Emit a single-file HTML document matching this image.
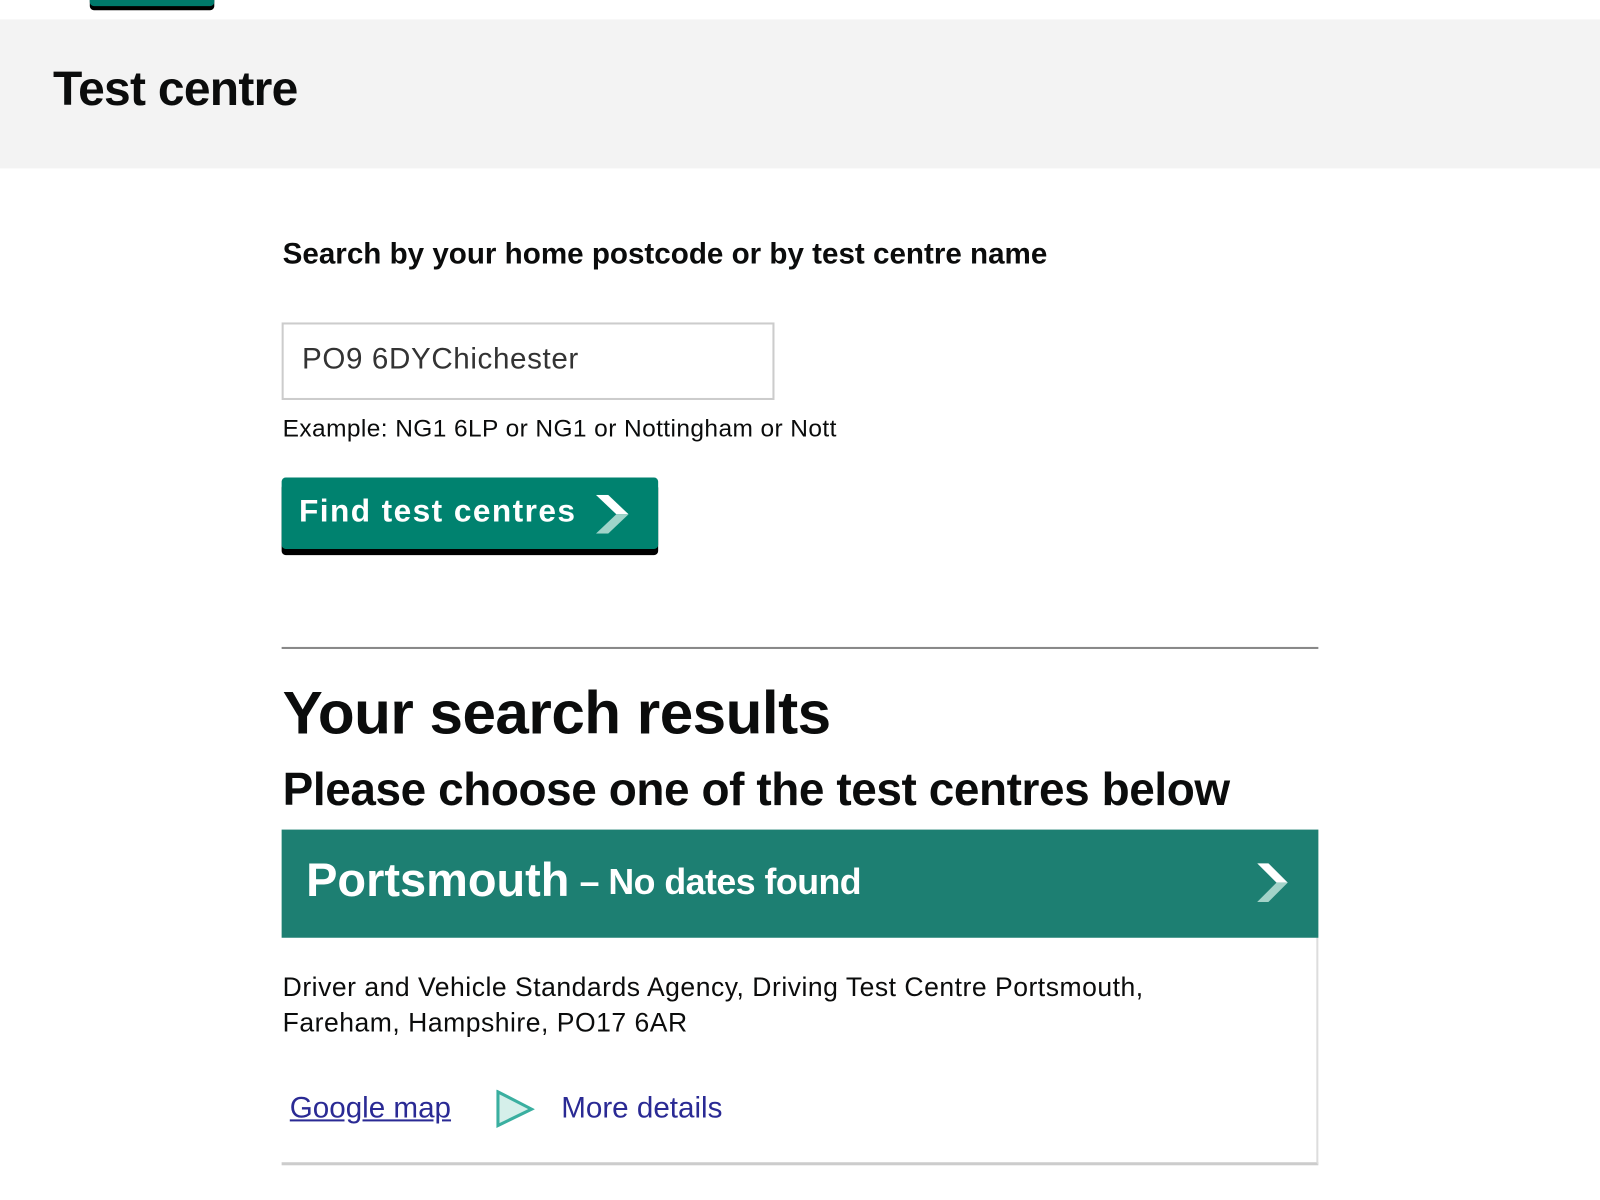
<!DOCTYPE html>
<html><head><meta charset="utf-8"><style>
body{margin:0;width:1600px;height:1200px;background:#fff;font-family:"Liberation Sans",Arial,sans-serif;color:#0b0c0c;position:relative;overflow:hidden}
#w{position:absolute;left:0;top:0;width:1568px;height:1176px;transform:scale(1.0204);transform-origin:0 0}
.abs{position:absolute}
.topbtn{left:88px;top:-10px;width:122px;height:16px;background:#00796b;border-radius:4px;box-shadow:0 4px 0 #000}
.hdr{left:0;top:19px;width:1600px;height:146px;background:#f3f3f3}
h1{position:absolute;left:52px;top:59px;margin:0;font-size:47px;font-weight:bold;letter-spacing:-0.7px}
.lbl{left:277px;top:233px;font-size:29px;font-weight:bold;letter-spacing:0px}
.inp{left:276px;top:316px;border:2px solid #ccc;box-sizing:border-box;width:483px;height:76px}
.inp span{position:absolute;left:18px;top:18px;font-size:29px;color:#333;letter-spacing:0.6px}
.hint{left:277px;top:407px;font-size:24px;letter-spacing:0.4px}
.btn{left:276px;top:468px;width:369px;height:70px;background:#00826f;border-radius:4px;box-shadow:0 6px 0 #000;color:#fff;font-weight:bold;font-size:31px;letter-spacing:1.4px}
.btn span{position:absolute;left:17px;top:15px}
.hr{left:276px;top:634px;width:1016px;height:2px;background:#888}
.h2{left:277px;top:665px;font-size:59px;font-weight:bold;letter-spacing:-0.5px}
.h3{left:277px;top:748px;font-size:45px;font-weight:bold;letter-spacing:-0.4px}
.card{left:276px;top:813px;width:1016px;height:329px;border-right:2px solid #ddd;border-bottom:3px solid #ccc;box-sizing:border-box}
.bar{left:276px;top:813px;width:1016px;height:106px;background:#1d7f72;color:#fff;font-weight:bold}
.addr{left:277px;top:950px;font-size:26px;line-height:35px;letter-spacing:0.5px}
.gm{left:284px;top:1070px;font-size:29px;text-decoration:underline;color:#2a2a94}
.md{left:550px;top:1070px;font-size:29px;color:#2a2a94}
</style></head><body><div id="w">
<div class="abs topbtn"></div>
<div class="abs hdr"></div>
<h1>Test centre</h1>
<div class="abs lbl">Search by your home postcode or by test centre name</div>
<div class="abs inp"><span>PO9 6DYChichester</span></div>
<div class="abs hint">Example: NG1 6LP or NG1 or Nottingham or Nott</div>
<div class="abs btn"><span>Find test centres</span>
<svg class="abs" style="left:308px;top:17px" width="34" height="38" viewBox="0 0 34 38"><polygon points="0,0 12,0 32,19 20,19" fill="#fff"/><polygon points="20,19 32,19 12,38 0,38" fill="#9fd4c9"/></svg></div>
<div class="abs hr"></div>
<div class="abs h2">Your search results</div>
<div class="abs h3">Please choose one of the test centres below</div>
<div class="abs card"></div>
<div class="abs bar"><span class="abs" style="left:24px;top:22px;font-size:46px;letter-spacing:0px">Portsmouth</span><span class="abs" style="left:292px;top:32px;font-size:35px;letter-spacing:-0.5px">– No dates found</span>
<svg class="abs" style="left:956px;top:33px" width="32" height="38" viewBox="0 0 32 38"><polygon points="0,0 11,0 30,19 19,19" fill="#fff"/><polygon points="19,19 30,19 11,38 0,38" fill="#a3d3c9"/></svg></div>
<div class="abs addr">Driver and Vehicle Standards Agency, Driving Test Centre Portsmouth,<br>Fareham, Hampshire, PO17 6AR</div>
<div class="abs gm">Google map</div>
<svg class="abs" style="left:486px;top:1068px" width="38" height="38" viewBox="0 0 38 38"><polygon points="2,2 35,19 2,35" fill="#d5efea" stroke="#3aafa0" stroke-width="3"/></svg>
<div class="abs md">More details</div>
</div></body></html>
